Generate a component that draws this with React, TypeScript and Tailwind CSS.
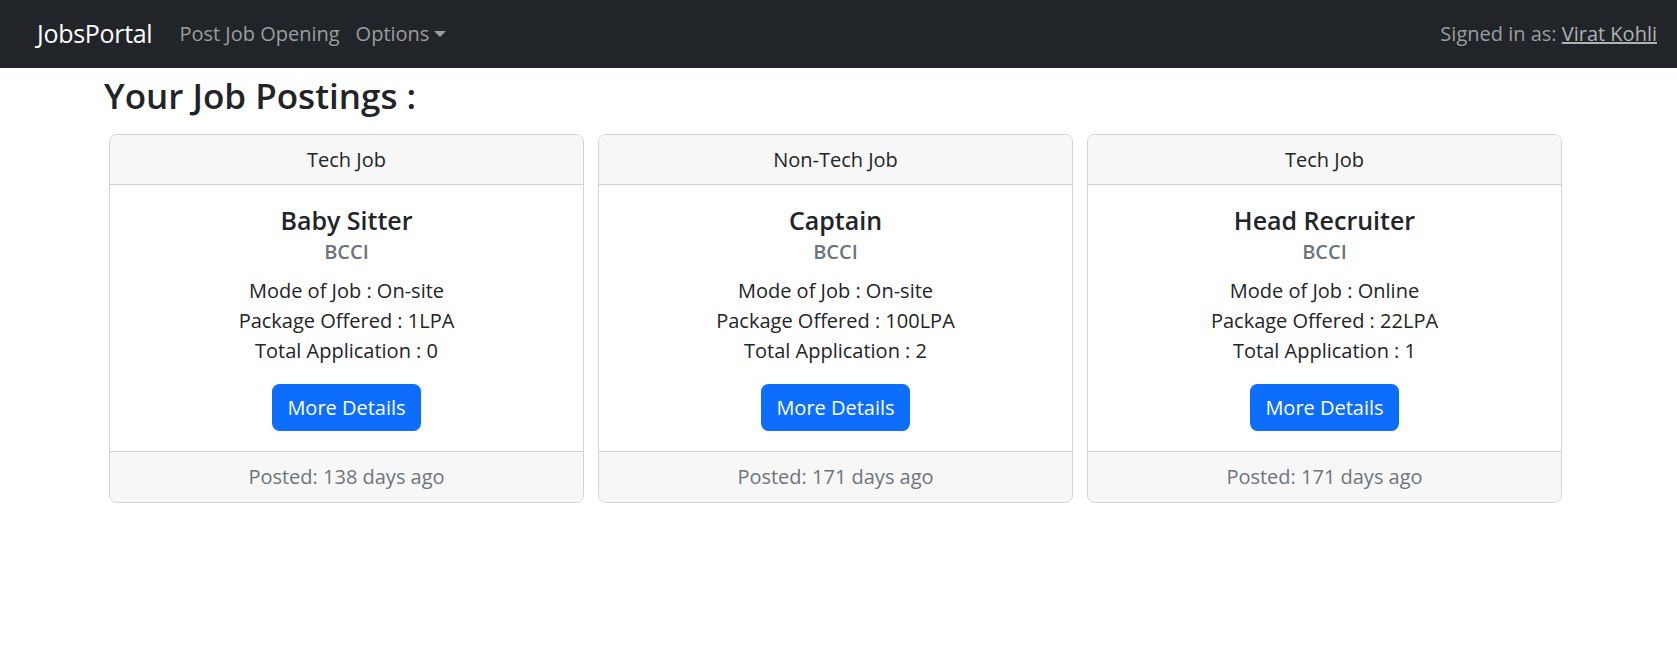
import React from "react"

type Job = {
  category: string
  title: string
  company: string
  mode: string
  pkg: string
  applications: number
  posted: string
}

const jobs: Job[] = [
  { category: "Tech Job", title: "Baby Sitter", company: "BCCI", mode: "On-site", pkg: "1LPA", applications: 0, posted: "138 days ago" },
  { category: "Non-Tech Job", title: "Captain", company: "BCCI", mode: "On-site", pkg: "100LPA", applications: 2, posted: "171 days ago" },
  { category: "Tech Job", title: "Head Recruiter", company: "BCCI", mode: "Online", pkg: "22LPA", applications: 1, posted: "171 days ago" }
]

const JobCard: React.FC<{ job: Job }> = ({ job }) => {
  return (
    <div className="w-[475px] flex flex-col border border-[#d3d3d4] rounded-[7.5px] overflow-hidden text-center bg-white">
      <div className="h-[50px] flex items-center justify-center bg-[#f7f7f7] border-b border-[#d3d3d4] text-[20px] text-[#212529]">
        {job.category}
      </div>
      <div className="px-5 pt-5 pb-5 flex flex-col items-center">
        <h5 className="text-[25px] leading-[30px] font-semibold text-[#212529]">{job.title}</h5>
        <h6 className="mt-[5px] text-[20px] leading-[24px] font-semibold text-[#6c757d]">{job.company}</h6>
        <div className="mt-[12px] text-[20px] leading-[30px] text-[#212529]">
          <p>Mode of Job : {job.mode}</p>
          <p>Package Offered : {job.pkg}</p>
          <p>Total Application : {job.applications}</p>
        </div>
        <button className="mt-[18px] h-[47px] px-[15px] rounded-[7.5px] bg-[#0d6efd] text-white text-[20px] leading-[30px]">
          More Details
        </button>
      </div>
      <div className="h-[51px] flex items-center justify-center bg-[#f7f7f7] border-t border-[#d3d3d4] text-[20px] text-[#6c757d]">
        Posted: {job.posted}
      </div>
    </div>
  )
}

export default function App() {
  return (
    <div className="min-h-[663px] bg-white font-['Open_Sans',sans-serif]">
      <nav className="h-[68px] bg-[#212529] flex items-center pl-[37px] pr-[20px]">
        <span className="text-[25px] text-white mr-[19px] tracking-[-0.3px]">JobsPortal</span>
        <a className="px-[8px] text-[20px] text-[#9b9d9f]">Post Job Opening</a>
        <a className="px-[8px] text-[20px] text-[#9b9d9f] flex items-center">
          Options
          <span className="ml-[5px] w-0 h-0 border-x-[6px] border-x-transparent border-t-[6px] border-t-[#9b9d9f]" />
        </a>
        <div className="ml-auto text-[20px] text-[#9b9d9f]">
          Signed in as: <a className="underline text-[#b0b2b4]">Virat Kohli</a>
        </div>
      </nav>
      <h3 className="pl-[104px] mt-[7px] text-[35px] leading-[42px] font-semibold text-[#212529]">Your Job Postings :</h3>
      <div className="mt-[17px] pl-[109px] flex gap-[14px]">
        {jobs.map((job, idx) => (
          <JobCard key={idx} job={job} />
        ))}
      </div>
    </div>
  )
}
